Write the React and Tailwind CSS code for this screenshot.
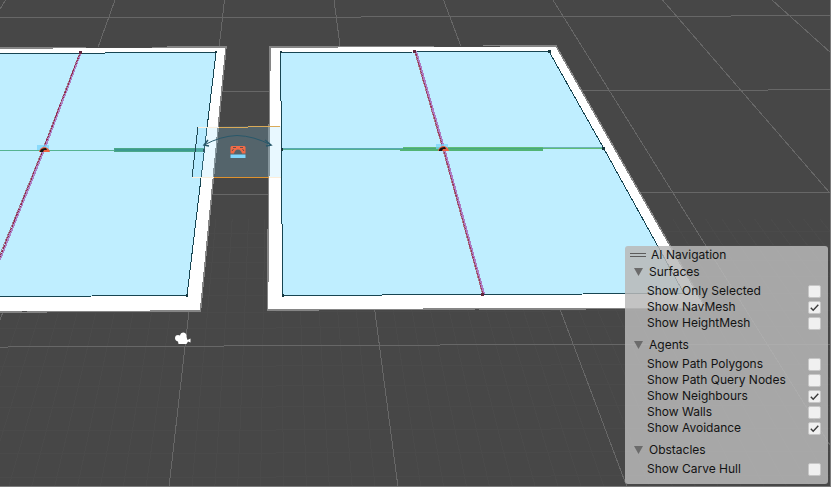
import { useState } from "react";

const SECTIONS = [
  { title: "Surfaces", options: [["Show Only Selected", false], ["Show NavMesh", true], ["Show HeightMesh", false]] },
  {
    title: "Agents",
    options: [
      ["Show Path Polygons", false],
      ["Show Path Query Nodes", false],
      ["Show Neighbours", true],
      ["Show Walls", false],
      ["Show Avoidance", true],
    ],
  },
  { title: "Obstacles", options: [["Show Carve Hull", false]] },
];

const MAJOR = [-2, -1, 0, 1, 2, 3, 4, 5];
const MINOR = Array.from({ length: 60 }, (_, i) => -2 + i / 10);
const MINOR_ROWS = [233, 247, 262, 278, 295, 312, 328, 366, 386, 407, 430, 453, 477];

// Grid lines running away from the viewer, indexed from the line under the camera.
const topX = (k) => 224.5 + 109.5 * k;
const bottomX = (k) => 169 + 229 * k;

function Grid() {
  return (
    <g fill="none" shapeRendering="crispEdges">
      <g stroke="#4a4a4a">
        {MINOR.map((k) => {
          const x = topX(k) + (bottomX(k) - topX(k)) * 0.45;
          return <line key={k} x1={x} y1={219} x2={bottomX(k)} y2={487} />;
        })}
        {MINOR_ROWS.map((y) => (
          <line key={y} x1="0" y1={y + 1} x2="831" y2={y - 2} />
        ))}
      </g>
      <g stroke="#676767">
        {MAJOR.map((k) => (
          <line key={k} x1={topX(k)} y1="0" x2={bottomX(k)} y2="487" />
        ))}
        <path d="M0 17.5H361M361 16.5H731M731 15.5H831M0 91.5H400M400 90.5H768M768 89.5H831M0 194.5H400M400 192.5H831M0 347.5H8M8 346.5H224M224 345.5H440M440 344.5H831" />
      </g>
    </g>
  );
}

function Agent({ x, y }) {
  return (
    <g transform={`translate(${x} ${y})`}>
      <path d="M-6-5H6V0H-6Z" fill="#74d3fb" opacity=".7" />
      <path d="M-4 2Q-3-3 2-3Q6-2 7 2Z" fill="#ed6340" />
      <path d="M-3 1Q-2-2 3-2L4 0L1 0L0 2H-3Z" fill="#151412" />
    </g>
  );
}

function Planes() {
  return (
    <g shapeRendering="crispEdges">
      <path d="M-2 48L226 47L200.500 311L-2 312" fill="#fff" stroke="#858585" strokeWidth="1.5" />
      <path d="M270 47L556 46L706 308.500L475 309L267.500 310Z" fill="#fff" stroke="#858585" strokeWidth="1.5" />
      <path d="M-2 53.5L216 52.5L187 295.5L-2 296.5Z" fill="#bfeeff" stroke="#174552" />
      <path d="M280.5 52.5L549 51.5L603.500 148L684 293.5L282.5 295.5L281.5 148Z" fill="#bfeeff" stroke="#174552" />
      <path d="M86 47.5H152M434 46.5H500M22 311.5H27M475 309.5H479" stroke="#4a4a4a" />
    </g>
  );
}

function NavLines() {
  return (
    <g fill="none" shapeRendering="crispEdges">
      <path d="M81 52L44 150L-2 264" stroke="#ad84c6" strokeWidth="2" />
      <path d="M80 52L42.500 150L-4 264" stroke="#a08392" strokeWidth="1" />
      <path d="M80.500 52L43 150L-3 264" stroke="#90284f" strokeWidth="1" strokeDasharray="2 1" />
      <path d="M416 51L444 148L484 294" stroke="#ad7dc4" strokeWidth="2" />
      <path d="M414.500 51L442.500 148L482.500 294" stroke="#ab7d87" strokeWidth="1" />
      <path d="M415 51L443 148L483 294" stroke="#98385f" strokeWidth="1" strokeDasharray="2 1" />
      <path d="M0 150.5H204" stroke="#55b391" strokeWidth="1.5" />
      <path d="M114 150H204" stroke="#4ba789" strokeWidth="4" />
      <path d="M115 150H204" stroke="#3b9a8f" strokeWidth="2" />
      <path d="M282 149H400" stroke="#55b08f" strokeWidth="2" />
      <path d="M282 148.5H443" stroke="#58aab2" />
      <path d="M400 150H543" stroke="#51b474" strokeWidth="2" />
      <path d="M403 148H603" stroke="#5fbd76" strokeWidth="2" />
      <path d="M403 148.5H543" stroke="#49a780" />
      <path d="M543 147.5H603" stroke="#6eb4b8" />
      <g fill="#173840">
        <path d="M203 149h2v3h-2ZM281 148h2v3h-2ZM602 147h3v3h-3Z" />
        <path d="M215 51h2v2h-2ZM186 294h2v3h-2ZM280 51h2v2h-2ZM282 294h2v3h-2ZM548 50h3v3h-3Z" />
      </g>
      <path d="M79 51h3v3h-3ZM413 50h3v3h-3ZM481 293h3v3h-3Z" fill="#64283e" />
    </g>
  );
}

function NavLink() {
  return (
    <g fill="none">
      <path d="M198 127L281 126V177H192Z" fill="#8adbff" fillOpacity=".2" />
      <g shapeRendering="crispEdges">
        <path d="M198 127.5H219M192 177.5H214M269 177.5H281" stroke="#fbeedb" />
        <path d="M219 127.5H248M248 126.5H280" stroke="#d9aa59" />
        <path d="M214 177.5H269" stroke="#df922e" />
        <path d="M198 127L192 177" stroke="#214b57" />
      </g>
      <path d="M204 145Q221 136 237 135.5Q254 136 271 145" stroke="#28586a" />
      <path d="M208 140L204 145L209 146M265 140L271 145L266 146" stroke="#28586a" strokeWidth="1.5" />
      <path d="M230.500 147Q231 146 232 146H244Q245 146 245.500 147V153.500H242Q241 149.500 238 149.500Q235 149.500 234 153.500H230.500Z" fill="#f16b47" />
      <path d="M233 147.500H236M240 147.500H243M232 151L233.500 149M244 151L242.500 149" stroke="#67504c" />
      <path d="M230.5 154.5H245.5V158H230.5Z" fill="#80d7fc" />
    </g>
  );
}

function Scene() {
  return (
    <svg
      className="absolute inset-0 h-full w-full"
      viewBox="0 0 831 487"
      preserveAspectRatio="xMinYMin slice"
      role="img"
      aria-label="Scene view"
    >
      <rect width="831" height="487" fill="#474747" />
      <Grid />
      <Planes />
      <NavLines />
      <NavLink />
      <Agent x={43} y={150} />
      <Agent x={442} y={149} />
      <path
        d="M176 335.500Q178 334.500 180 335.500Q180.500 332.500 183.500 332.500Q187 333 186.500 337L187.500 340L190.500 338.500V342.500L188 341.500L186.500 344H178.500L178 341.500Q175 340.500 175 338Q175 336.500 176 335.500Z"
        fill="#fff"
      />
    </svg>
  );
}

function OptionRow({ label, initial }) {
  const [on, setOn] = useState(initial);
  return (
    <label className="flex h-4 items-center justify-between pl-[22px] pr-[7px]">
      <span>{label}</span>
      <span className="grid">
        <input
          type="checkbox"
          checked={on}
          onChange={() => setOn(!on)}
          className="col-start-1 row-start-1 size-[13px] appearance-none rounded-xs border border-[#c6c6c6] bg-[#f0f0f0]"
        />
        {on && (
          <svg className="pointer-events-none col-start-1 row-start-1 size-[13px]" viewBox="0 0 13 13" fill="none" aria-hidden="true">
            <path d="M2.800 6.800L5.200 9.300L10.300 3.800" stroke="#3c3c3c" strokeWidth="1.400" />
          </svg>
        )}
      </span>
    </label>
  );
}

function Section({ title, options }) {
  const [open, setOpen] = useState(true);
  return (
    <section>
      <button
        type="button"
        aria-expanded={open}
        onClick={() => setOpen(!open)}
        className="flex h-[17px] w-full items-center gap-1.5 pl-[9px] text-left"
      >
        <svg className="h-2 w-[9px]" viewBox="0 0 9 8" aria-hidden="true">
          <path d={open ? "M0 0H9L4.500 8Z" : "M1 0L8 4L1 8Z"} fill="#6b6b6b" />
        </svg>
        {title}
      </button>
      {open && (
        <div className="pt-[3px]">
          {options.map(([label, initial]) => (
            <OptionRow key={label} label={label} initial={initial} />
          ))}
        </div>
      )}
    </section>
  );
}

export default function App() {
  return (
    <main className="relative flex h-screen w-full items-end justify-end overflow-hidden bg-[#474747] pr-[3px] pb-[3px] font-['Inter','Liberation_Sans',sans-serif] text-xs leading-4 text-[#131313] after:pointer-events-none after:absolute after:inset-0 after:border-r after:border-b after:border-[#7c7c7c]">
      <Scene />
      <aside className="relative w-[203px] rounded-[3px] bg-[#b9b9b9]/85 pb-[7px]">
        <header className="flex h-[17px] items-center gap-[5px] pl-[5px]">
          <span className="h-1 w-4 border-y border-[#5c5c5c]" />
          <h1>AI Navigation</h1>
        </header>
        <div className="flex flex-col gap-[5px]">
          {SECTIONS.map((s) => (
            <Section key={s.title} title={s.title} options={s.options} />
          ))}
        </div>
      </aside>
    </main>
  );
}
